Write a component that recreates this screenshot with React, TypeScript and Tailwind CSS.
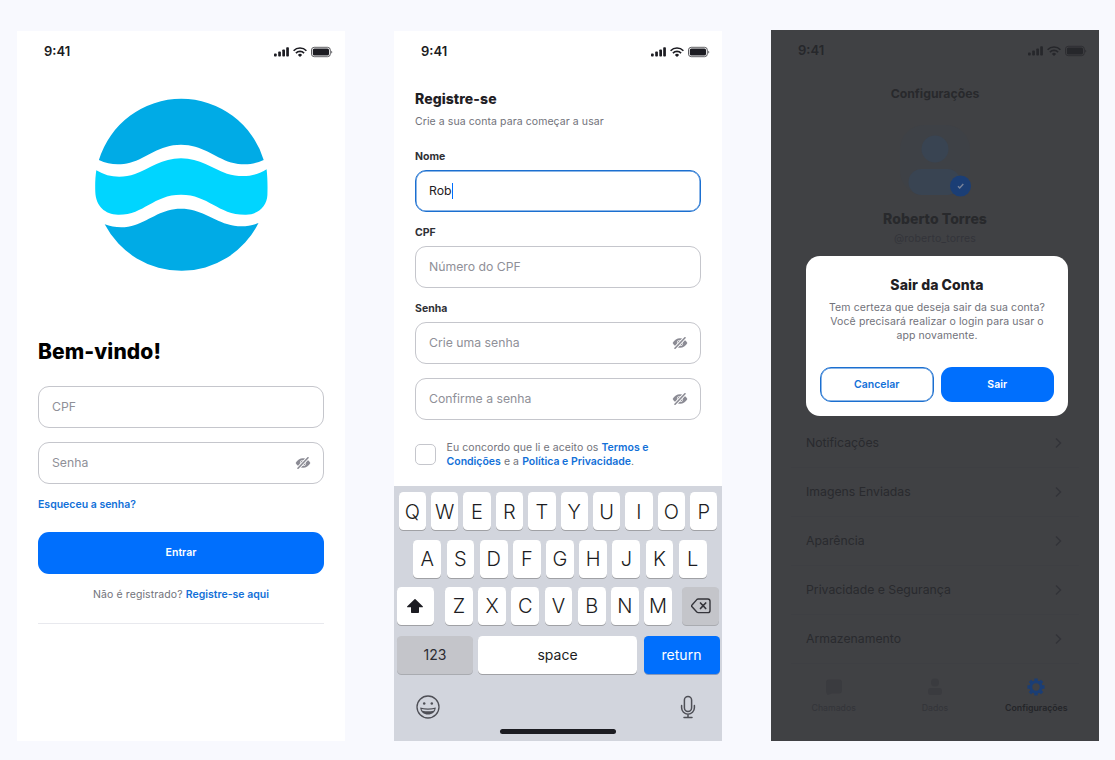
import type { ReactNode } from "react";

function StatusBar({ dim = false }: { dim?: boolean }) {
  return (
    <div className={`flex h-[41px] shrink-0 items-center justify-between pl-[27px] pr-3 ${dim ? "text-[#26272b]" : "text-[#1c1c22]"}`}>
      <span className="text-[13px] font-semibold leading-none">9:41</span>
      <svg className="h-3 w-[60px]" viewBox="0 0 60 12" fill="currentColor">
        <rect x="1" y="7.4" width="2.7" height="3.1" rx=".8" />
        <rect x="5.2" y="5.6" width="2.7" height="4.9" rx=".8" />
        <rect x="9.3" y="3.4" width="2.7" height="7.1" rx=".8" />
        <rect x="13.2" y="1.2" width="2.7" height="9.3" rx=".8" />
        <g fill="none" stroke="currentColor" strokeWidth="1.6">
          <path d="M20.6 4.7a9 9 0 0 1 12.8 0" />
          <path d="M22.9 7.1a5.8 5.8 0 0 1 8.2 0" />
        </g>
        <path d="M24.9 8.9a3 3 0 0 1 4.2 0L27 11z" />
        <rect x="38.5" y="1.3" width="18.8" height="9.400" rx="2.7" fill="none" stroke="currentColor" strokeOpacity=".7" />
        <rect x="39.800" y="2.600" width="16.200" height="6.800" rx="1.500" />
        <path d="M58.1 4.7c1.6.5 1.6 2.3 0 2.8z" opacity=".6" />
      </svg>
    </div>
  );
}

function EyeOff() {
  return (
    <svg className="h-3 w-4 shrink-0" viewBox="0 0 16 12">
      <path d="M.6 6C2.300 2.800 5 1.200 8 1.200s5.700 1.600 7.400 4.800c-1.700 3.200-4.400 4.800-7.400 4.800S2.300 9.200 .6 6z" fill="#8b8b94" />
      <circle cx="8" cy="6" r="3.100" fill="#fff" />
      <circle cx="8" cy="6" r="2.500" fill="#8b8b94" />
      <path d="M2.300 12 13.700 0" stroke="#fff" strokeWidth="3.300" />
      <path d="M3 11.200 13 .8" stroke="#8b8b94" strokeWidth="1.600" strokeLinecap="round" />
    </svg>
  );
}

function Field({ text, secret = false }: { text: string; secret?: boolean }) {
  return (
    <div className="flex h-[42px] shrink-0 items-center justify-between rounded-[11px] border border-[#c5c6cc] bg-white pl-[13px] pr-3">
      <span className="text-[12.25px] text-[#8f9098]">{text}</span>
      {secret && <EyeOff />}
    </div>
  );
}

function Logo() {
  return (
    <svg className="h-[174px] w-[174px]" viewBox="94 98 174 174">
      <path
        fill="#00abe6"
        d="M98.900 160A86.100 86.100 0 0 1 263.700 160C253 165 243 165.500 231 162.500C214 157 202 144.700 181 144.700C159 144.700 147 158 130 162.800C119 165.500 109 164.800 98.900 160Z"
      />
      <path
        fill="#00d5ff"
        d="M96.300 170.200C108 177.500 122 178.500 135 174C150 168.500 162 158.300 181 158.300C200 158.300 212 168.500 227 173.700C241 178 256 176.500 266.600 169.300C267.500 177 267.700 186 267.400 195C267 206 258 214.700 246 214.700C218 215.200 209 194.700 181 194.700C153 194.700 144 215.200 118 214.700C105 214.500 95.800 206 95.300 192C95 184 95.300 177 96.300 170.200Z"
      />
      <path
        fill="#00abe6"
        d="M104.700 224.300C114 227.800 125 228.500 135 225C151 219.500 162 208.700 181 208.700C200 208.700 212 219.500 227 224C237 227.300 248 227.300 258.500 223.100A86.300 86.300 0 0 1 104.700 224.300Z"
      />
    </svg>
  );
}

function Login() {
  return (
    <section className="flex h-[710px] w-[328px] flex-col bg-white">
      <StatusBar />
      <div className="flex justify-center pt-[26px]">
        <Logo />
      </div>
      <div className="flex flex-col px-[21px] pt-[66px]">
        <h1 className="text-[21px] font-extrabold leading-[28px] tracking-[0.1px] text-black">Bem-vindo!</h1>
        <div className="mt-5 flex flex-col gap-[14px]">
          <Field text="CPF" />
          <Field text="Senha" secret />
        </div>
        <a className="mt-[13px] text-[10.5px] font-semibold leading-4 text-[#1270d8]">Esqueceu a senha?</a>
        <button className="mt-[19px] h-[42px] rounded-[11px] bg-[#006ffd] text-[10.5px] font-semibold text-white">Entrar</button>
        <p className="mt-[13px] border-b border-[#e8e9ee] pb-5 text-center text-[10.5px] leading-4 tracking-[0.1px] text-[#71727a]">
          Não é registrado? <b className="font-semibold tracking-normal text-[#1270d8]">Registre-se aqui</b>
        </p>
      </div>
    </section>
  );
}

function Label({ children }: { children: ReactNode }) {
  return <div className="mb-[5px] text-[10.5px] font-bold leading-4 text-[#2f3036]">{children}</div>;
}

function Key({ children, className = "w-[28px]" }: { children: ReactNode; className?: string }) {
  return (
    <div className={`flex h-[38px] shrink-0 items-center justify-center rounded-[4.500px] bg-white font-light text-[#1c1c22] shadow-[0_1px_0_#a0a1a5] ${className}`}>
      {children}
    </div>
  );
}

function Keyboard() {
  return (
    <div className="flex h-[255px] shrink-0 flex-col bg-[#d2d5dd] pt-[6px] text-[20px]">
      <div className="flex justify-center gap-[5px]">
        {"QWERTYUIOP".split("").map((k) => (
          <Key key={k} className="w-[27.400px] pt-px">{k}</Key>
        ))}
      </div>
      <div className="mt-[9.500px] flex justify-center gap-[5.400px] pl-1">
        {"ASDFGHJKL".split("").map((k) => (
          <Key key={k} className="w-[27.800px]">{k}</Key>
        ))}
      </div>
      <div className="mt-[9.500px] flex justify-between px-[3px]">
        <Key className="w-[36.500px]">
          <svg className="h-[17px] w-[18px]" viewBox="0 0 18 17" fill="currentColor">
            <path d="M8.500 1.300a.8.8 0 0 1 1 0l7.200 7c.5.500.2 1-.4 1H13v4.800c0 .600-.4 1-1 1H6c-.6 0-1-.400-1-1V9.300H1.700c-.6 0-.9-.5-.4-1z" />
          </svg>
        </Key>
        <div className="flex gap-[5.300px] pl-px">
          {"ZXCVBNM".split("").map((k) => (
            <Key key={k} className="w-[27.900px]">{k}</Key>
          ))}
        </div>
        <div className="flex h-[38px] w-[36.500px] items-center justify-center rounded-[4.500px] bg-[#c4c5ca] text-[#34343a] shadow-[0_1px_0_#a9abb0]">
          <svg className="h-4 w-5" viewBox="0 0 20 16" fill="none" stroke="currentColor" strokeWidth="1.400" strokeLinecap="round" strokeLinejoin="round">
            <path d="M7.200 1h9.600A2.200 2.200 0 0 1 19 3.200v9.200a2.200 2.200 0 0 1-2.200 2.200H7.200a2 2 0 0 1-1.400-.6L.8 8.600a1 1 0 0 1 0-1.400l5-5.600A2 2 0 0 1 7.200 1z" />
            <path d="m9.500 5 5.200 5.500m0-5.500-5.200 5.500" strokeWidth="1.700" />
          </svg>
        </div>
      </div>
      <div className="mt-[10.500px] flex justify-between pl-[3px] pr-[2.500px] text-[14px]">
        <div className="flex gap-[5px]">
          <div className="flex h-[38px] w-[76px] items-center justify-center rounded-[4.500px] bg-[#c4c5ca] pb-px text-[#2c2c32] shadow-[0_1px_0_#a9abb0]">123</div>
          <div className="flex h-[38px] w-[159px] items-center justify-center rounded-[4.500px] bg-white pb-px text-[#1c1c22] shadow-[0_1px_0_#a0a1a5]">space</div>
        </div>
        <div className="flex h-[38px] w-[76px] items-center justify-center rounded-[4.500px] bg-[#006ffd] pb-px text-white shadow-[0_1px_0_#8598bb]">return</div>
      </div>
      <div className="mt-[21.500px] flex items-center justify-between px-[22px] text-[#4e4f56]">
        <svg className="h-6 w-6" viewBox="0 0 24 24" fill="none" stroke="currentColor">
          <circle cx="12" cy="12" r="11" strokeWidth="1.300" />
          <circle cx="8.200" cy="8.500" r="1.250" fill="currentColor" stroke="none" />
          <circle cx="15.800" cy="8.500" r="1.250" fill="currentColor" stroke="none" />
          <path d="M4.200 12.500c4.800 1.200 10.800 1.200 15.600 0-.3 4.500-3.600 7-7.800 7s-7.500-2.500-7.800-7z" fill="currentColor" stroke="none" />
          <path d="M5.600 14c4.200.9 8.600.9 12.800 0-.2.700-.4 1.200-.8 1.700-3.700.7-7.500.7-11.200 0-.4-.5-.6-1-.8-1.700z" fill="#d2d5dd" stroke="none" />
        </svg>
        <svg className="h-6 w-6" viewBox="0 0 24 24" fill="none" stroke="currentColor" strokeWidth="1.500" strokeLinecap="round">
          <rect x="8.400" y="1.400" width="7.200" height="15" rx="3.600" />
          <path d="M5.600 10.500v2.300a6.400 6.400 0 0 0 12.800 0v-2.300M12 19.300v3.300M8 22.600h8" />
        </svg>
      </div>
      <div className="mx-auto mt-[10px] h-[5px] w-[116px] rounded-full bg-[#1c1c22]" />
    </div>
  );
}

function Register() {
  return (
    <section className="flex h-[710px] w-[328px] flex-col bg-white">
      <StatusBar />
      <div className="flex grow flex-col px-[21px] pt-[17px]">
        <h2 className="text-[14px] font-extrabold leading-5 tracking-[0.08px] text-[#1f2024]">Registre-se</h2>
        <p className="mt-[5px] text-[10.5px] leading-4 tracking-[0.08px] text-[#71727a]">Crie a sua conta para começar a usar</p>
        <div className="mt-[19px]">
          <Label>Nome</Label>
          <div className="flex h-[42px] items-center rounded-[11px] border-[1.500px] border-[#1b6fd0] pl-[13px] text-[12.25px] text-[#1f2024] shadow-[inset_0_0_0_0.500px_#1b6fd0]">
            Rob
            <span className="h-4 w-[1.500px] bg-[#006ffd]" />
          </div>
        </div>
        <div className="mt-[13px]">
          <Label>CPF</Label>
          <Field text="Número do CPF" />
        </div>
        <div className="mt-[13px]">
          <Label>Senha</Label>
          <div className="flex flex-col gap-[14px]">
            <Field text="Crie uma senha" secret />
            <Field text="Confirme a senha" secret />
          </div>
        </div>
        <div className="mt-[21px] flex gap-[10.500px]">
          <span className="mt-[3px] h-[21px] w-[21px] shrink-0 rounded-[5px] border-[1.300px] border-[#c5c6cc]" />
          <p className="text-[10.5px] leading-[14px] tracking-[0.08px] text-[#71727a]">
            Eu concordo que li e aceito os <b className="font-semibold tracking-normal text-[#1270d8]">Termos e<br />Condições</b> e a{" "}
            <b className="font-semibold tracking-normal text-[#1270d8]">Política e Privacidade</b>.
          </p>
        </div>
      </div>
      <Keyboard />
    </section>
  );
}

function Settings() {
  const rows = ["Notificações", "Imagens Enviadas", "Aparência", "Privacidade e Segurança", "Armazenamento"];
  return (
    <section className="relative -mt-px flex h-[711px] w-[328px] flex-col bg-[#404144]">
      <StatusBar dim />
      <div className="mt-[15px] text-center text-[12.250px] font-bold leading-4 text-[#28292c]">Configurações</div>
      <div className="mt-[22px] flex justify-center">
        <svg className="h-[74px] w-[74px]" viewBox="0 0 74 74">
          <rect x="2" y="1" width="70" height="70" rx="24" fill="#3e4146" />
          <circle cx="37" cy="25" r="13.500" fill="#394452" />
          <rect x="10.500" y="45" width="52" height="26" rx="13" fill="#394452" />
          <circle cx="62.500" cy="62" r="10.500" fill="#1b3e75" />
          <path d="m60 62.300 1.700 1.700 3.600-4" fill="none" stroke="#78839a" strokeWidth="1.400" />
        </svg>
      </div>
      <div className="mt-[11px] text-center text-[14px] font-extrabold leading-5 tracking-[0.05px] text-[#28292c]">Roberto Torres</div>
      <div className="mt-px text-center text-[10.5px] leading-[18px] tracking-[0.1px] text-[#33343a]">@roberto_torres</div>
      <div className="mt-[171px] flex flex-col px-5">
        {rows.map((row) => (
          <div key={row} className="flex h-[49px] items-center justify-between border-b border-[#3e3f43] px-[15px] text-[12.250px] text-[#292a2e]">
            {row}
            <svg className="h-3 w-3" viewBox="0 0 12 12" fill="none" stroke="#323338" strokeWidth="1.400">
              <path d="m4 1.500 4.500 4.500L4 10.500" />
            </svg>
          </div>
        ))}
      </div>
      <div className="mt-[14px] grid grid-cols-3 px-3 text-center text-[8.750px] leading-[14px] text-[#333439]">
        <div className="flex flex-col items-center gap-[5px]">
          <svg className="h-[18px] w-[18px]" viewBox="0 0 18 18" fill="#3a3b3f"><path d="M4 1.500h10a3 3 0 0 1 3 3v8a3 3 0 0 1-3 3H7l-4.500 1.500L1 14V4.500a3 3 0 0 1 3-3z" /></svg>
          Chamados
        </div>
        <div className="flex flex-col items-center gap-[5px]">
          <svg className="h-[18px] w-[18px]" viewBox="0 0 18 18" fill="#3a3b3f"><circle cx="9" cy="4.500" r="4" /><rect x="2" y="10" width="14" height="7" rx="3" /></svg>
          Dados
        </div>
        <div className="flex flex-col items-center gap-[5px] font-semibold text-[#242529]">
          <svg className="h-[18px] w-[18px]" viewBox="0 0 18 18">
            <g stroke="#1b3e75" strokeWidth="3.400">
              <path d="M9 .4v17.200M.4 9h17.200M2.900 2.900l12.200 12.200M15.100 2.900 2.900 15.100" />
            </g>
            <circle cx="9" cy="9" r="6.600" fill="#1b3e75" />
            <circle cx="9" cy="9" r="3.700" fill="#404144" />
          </svg>
          Configurações
        </div>
      </div>
      <div className="absolute left-[35px] top-[226px] flex h-[160px] w-[262px] flex-col rounded-[14px] bg-white px-[14px] pt-[19px] text-center">
        <h2 className="text-[14px] font-extrabold leading-5 tracking-[0.08px] text-[#1f2024]">Sair da Conta</h2>
        <p className="mt-[6px] text-[10.5px] leading-[14px] tracking-[0.1px] text-[#71727a]">
          Tem certeza que deseja sair da sua conta?
          <br />
          Você precisará realizar o login para usar o
          <br />
          app novamente.
        </p>
        <div className="mt-6 grid grid-cols-2 gap-[7px] text-[10.5px] font-semibold">
          <button className="h-[35px] rounded-[11px] border-[1.500px] border-[#1b6fd0] pt-px text-[#1270d8] shadow-[inset_0_0_0_0.500px_#1b6fd0]">Cancelar</button>
          <button className="h-[35px] rounded-[11px] bg-[#006ffd] pt-px text-white">Sair</button>
        </div>
      </div>
    </section>
  );
}

export default function App() {
  return (
    <main className="flex h-[760px] w-[1115px] gap-[49px] overflow-hidden bg-[#f8f9fe] pl-[17px] pt-[31px] font-['Inter',sans-serif] antialiased">
      <Login />
      <Register />
      <Settings />
    </main>
  );
}
